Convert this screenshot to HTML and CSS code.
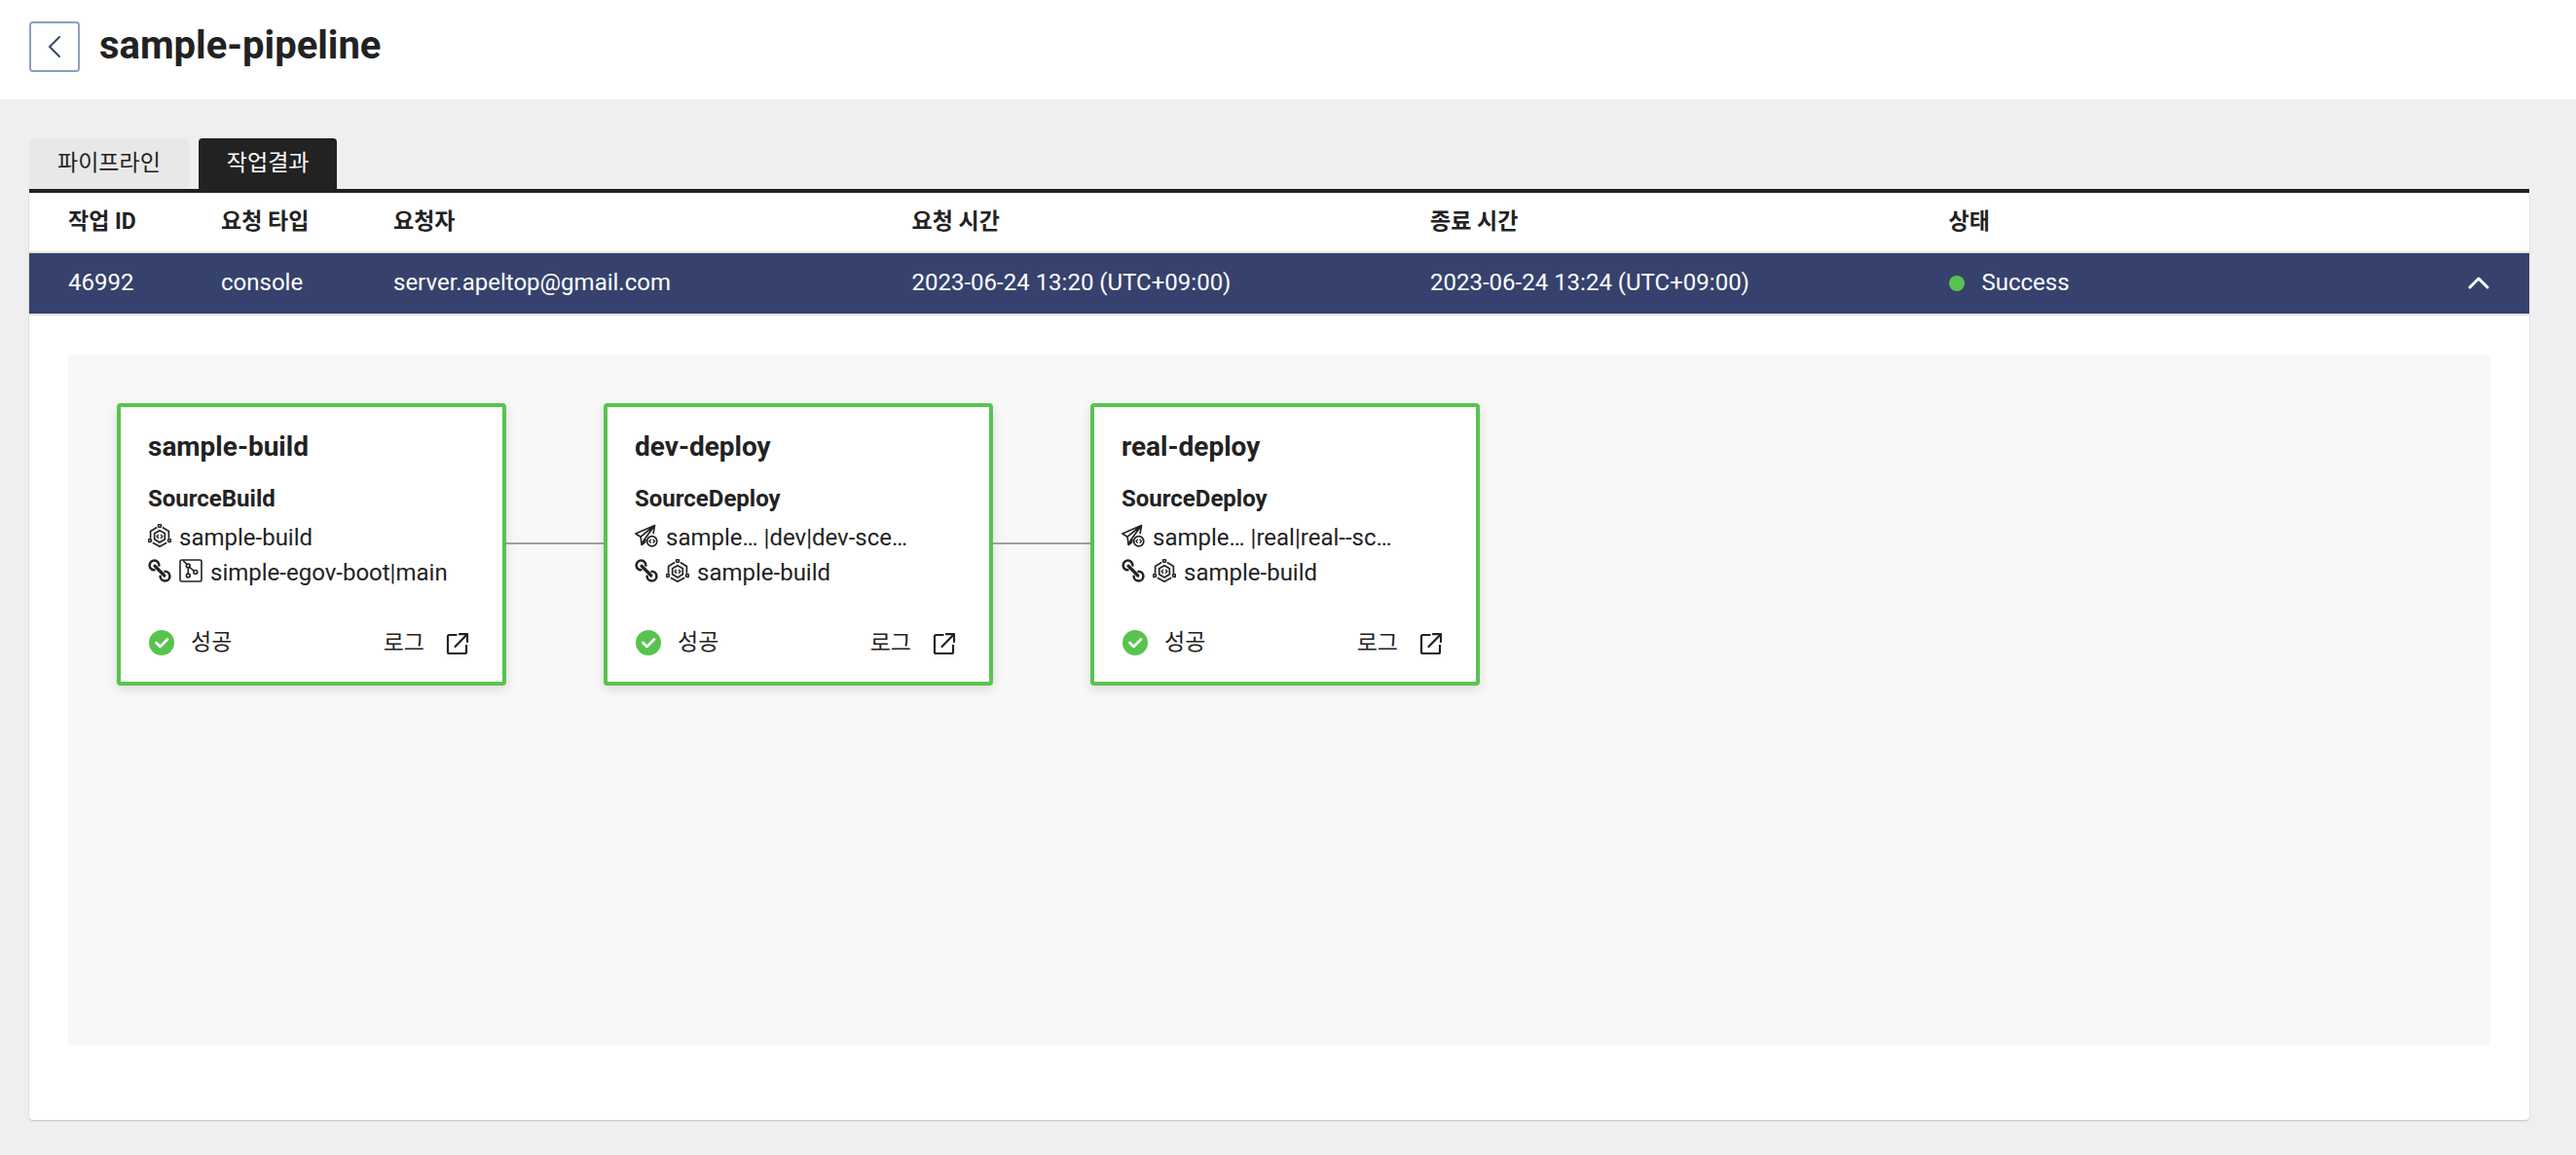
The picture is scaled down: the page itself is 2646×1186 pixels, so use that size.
FILE: index.html
```html
<!DOCTYPE html>
<html lang="ko">
<head>
<meta charset="utf-8">
<meta name="viewport" content="width=device-width, initial-scale=1">
<title>sample-pipeline</title>
<link rel="stylesheet" href="styles.css">
</head>
<body>
<svg class="sprite" aria-hidden="true">
  <symbol id="icon-build" viewBox="0 0 24 24">
    <g fill="none" stroke="currentColor" stroke-width="1.7">
      <path d="M9.2 3.6 2.6 7.4v7.4M14.8 3.6l6.6 3.8v7.4M4.8 19.2l7.2 4 7.2-4"/>
      <circle cx="12" cy="2" r="1.5"/><circle cx="2" cy="17" r="1.5"/><circle cx="22" cy="17" r="1.5"/>
      <path d="m12 6.8 5.3 3v6L12 18.900l-5.300-3.100v-6z"/>
      <path d="M10.900 10.900 9.200 12.800l1.700 1.900M13.100 10.900l1.700 1.900-1.700 1.900" stroke-width="1.400"/>
    </g>
  </symbol>
  <symbol id="icon-deploy" viewBox="0 0 24 24">
    <g fill="none" stroke="currentColor" stroke-width="1.7" stroke-linejoin="round">
      <path d="M20.500 1.500.900 10l5.200 3.200zM20.500 1.500 6.100 13.200l1 8.300 2.800-5.500zM20.500 1.500 9.900 16l1.800 1.200M20.500 1.500l-1.500 8.700M7.100 21.500l4.200-3.400"/>
      <circle cx="17.700" cy="17.700" r="5.100"/>
      <path d="m16.700 15.800-1.700 1.900 1.700 1.900M18.700 15.800l1.700 1.900-1.700 1.900" stroke-width="1.400"/>
    </g>
  </symbol>
  <symbol id="icon-link" viewBox="0 0 24 24">
    <g fill="none" stroke="currentColor" stroke-width="2.500" stroke-linecap="round">
      <path d="M6.400 11.300a4.900 4.900 0 1 1 5-4.700M17.500 12.800a4.900 4.900 0 1 1-4.900 5"/>
      <path d="m7 7.200 9.800 9.800" stroke-width="3.200"/>
    </g>
  </symbol>
  <symbol id="icon-repo" viewBox="0 0 24 24">
    <g fill="none" stroke="currentColor" stroke-width="1.600">
      <rect x="1" y="1" width="22" height="22" rx="1.500"/>
      <path d="M4 1.500 8 5.500M9.300 9v6M10.800 8.500l4.400 3.700"/>
      <circle cx="9.300" cy="7" r="1.900"/><circle cx="9.300" cy="17" r="1.900"/><circle cx="16.800" cy="13.400" r="1.900"/>
    </g>
  </symbol>
  <symbol id="icon-check" viewBox="0 0 28 28">
    <circle cx="14" cy="14" r="13" fill="#57c44f"/>
    <path d="m8.500 14 4 4 7.500-7.500" fill="none" stroke="#fff" stroke-width="2.600" stroke-linecap="round" stroke-linejoin="round"/>
  </symbol>
  <symbol id="icon-open" viewBox="0 0 24 24">
    <g fill="none" stroke="currentColor" stroke-width="2.200" stroke-linejoin="round">
      <path d="M11.500 3H3.500a1.500 1.500 0 0 0-1.500 1.500v16A1.500 1.500 0 0 0 3.500 22h16a1.500 1.500 0 0 0 1.500-1.500V13"/>
      <path d="M14 2.200h8V10M21.500 2.700 9.500 15" stroke-linecap="round"/>
    </g>
  </symbol>
</svg>

<header class="page-header">
  <button class="back-button" type="button" aria-label="뒤로">
    <svg class="back-icon" viewBox="0 0 14 24" aria-hidden="true"><path d="M12 2 2 12l10 10"/></svg>
  </button>
  <h1 class="page-title">sample-pipeline</h1>
</header>

<main class="page-body">
  <div class="tabs" role="tablist">
    <button class="tab" type="button" role="tab" aria-selected="false">파이프라인</button>
    <button class="tab tab-active" type="button" role="tab" aria-selected="true">작업결과</button>
  </div>

  <section class="result">
    <table class="jobs">
      <colgroup>
        <col class="col-short"><col class="col-short"><col><col><col><col><col class="col-toggle">
      </colgroup>
      <thead>
        <tr>
          <th scope="col">작업 ID</th>
          <th scope="col">요청 타입</th>
          <th scope="col">요청자</th>
          <th scope="col">요청 시간</th>
          <th scope="col">종료 시간</th>
          <th scope="col">상태</th>
          <td></td>
        </tr>
      </thead>
      <tbody>
        <tr class="job-selected">
          <td>46992</td>
          <td>console</td>
          <td>server.apeltop@gmail.com</td>
          <td>2023-06-24 13:20 (UTC+09:00)</td>
          <td>2023-06-24 13:24 (UTC+09:00)</td>
          <td><span class="status"><span class="status-dot"></span>Success</span></td>
          <td class="toggle-cell">
            <button class="toggle" type="button" aria-label="접기" aria-expanded="true">
              <svg class="toggle-icon" viewBox="0 0 24 16" aria-hidden="true"><path d="m3 13 9-9 9 9"/></svg>
            </button>
          </td>
        </tr>
      </tbody>
    </table>

    <div class="detail">
      <div class="flow">
        <article class="stage">
          <h2 class="stage-name">sample-build</h2>
          <h3 class="stage-type">SourceBuild</h3>
          <p class="stage-row"><svg class="icon"><use href="#icon-build"/></svg><span>sample-build</span></p>
          <p class="stage-row"><svg class="icon"><use href="#icon-link"/></svg><svg class="icon"><use href="#icon-repo"/></svg><span>simple-egov-boot|main</span></p>
          <footer class="stage-footer">
            <svg class="check"><use href="#icon-check"/></svg><span>성공</span>
            <a class="log-link" href="#log-build">로그<svg class="icon-open"><use href="#icon-open"/></svg></a>
          </footer>
        </article>
        <div class="connector"></div>
        <article class="stage">
          <h2 class="stage-name">dev-deploy</h2>
          <h3 class="stage-type">SourceDeploy</h3>
          <p class="stage-row"><svg class="icon"><use href="#icon-deploy"/></svg><span>sample… |dev|dev-sce…</span></p>
          <p class="stage-row"><svg class="icon"><use href="#icon-link"/></svg><svg class="icon"><use href="#icon-build"/></svg><span>sample-build</span></p>
          <footer class="stage-footer">
            <svg class="check"><use href="#icon-check"/></svg><span>성공</span>
            <a class="log-link" href="#log-dev">로그<svg class="icon-open"><use href="#icon-open"/></svg></a>
          </footer>
        </article>
        <div class="connector"></div>
        <article class="stage">
          <h2 class="stage-name">real-deploy</h2>
          <h3 class="stage-type">SourceDeploy</h3>
          <p class="stage-row"><svg class="icon"><use href="#icon-deploy"/></svg><span>sample… |real|real--sc…</span></p>
          <p class="stage-row"><svg class="icon"><use href="#icon-link"/></svg><svg class="icon"><use href="#icon-build"/></svg><span>sample-build</span></p>
          <footer class="stage-footer">
            <svg class="check"><use href="#icon-check"/></svg><span>성공</span>
            <a class="log-link" href="#log-real">로그<svg class="icon-open"><use href="#icon-open"/></svg></a>
          </footer>
        </article>
      </div>
    </div>
  </section>
</main>
</body>
</html>
```
FILE: styles.css
```css
* {
  box-sizing: border-box;
}

body {
  margin: 0;
  min-height: 100vh;
  background: #efefef;
  color: #222;
  font-family: Roboto, "Noto Sans CJK KR", sans-serif;
  font-size: 24px;
  line-height: 36px;
}

button {
  font: inherit;
  color: inherit;
  cursor: pointer;
}

h1, h2, h3, p {
  margin: 0;
}

.sprite {
  display: none;
}

/* Header */
.page-header {
  display: flex;
  gap: 20px;
  padding: 22px 30px 28px;
  background: #fff;
}

.back-button {
  display: grid;
  place-items: center;
  width: 52px;
  height: 52px;
  padding: 0;
  border: 2px solid #8c9fbf;
  border-radius: 4px;
  background: #fff;
}

.back-icon {
  width: 14px;
  height: 24px;
  fill: none;
  stroke: #37496b;
  stroke-width: 2;
  stroke-linecap: round;
}

.page-title {
  font-size: 40px;
  line-height: 50px;
}

/* Tabs */
.page-body {
  padding: 40px 48px 36px 30px;
}

.tabs {
  display: flex;
  gap: 10px;
  border-bottom: 4px solid #222;
}

.tab {
  height: 52px;
  padding: 0 29px;
  border: 0;
  border-radius: 4px 4px 0 0;
  background: #e8e8e8;
  font-size: 23px;
}

.tab-active {
  background: #222;
  color: #fff;
}

/* Job table */
.result {
  border-radius: 4px;
  background: #fff;
  box-shadow: 0 1px 2px rgba(0, 0, 0, 0.2);
}

.jobs {
  width: 100%;
  table-layout: fixed;
  border-collapse: separate;
  border-spacing: 0;
  text-align: left;
}

.col-short {
  width: 177px;
}

.col-toggle {
  width: 84px;
}

.jobs th,
.jobs td {
  height: 62px;
  padding: 0 20px;
  border-bottom: 2px solid #e2e2e2;
  white-space: nowrap;
}

.jobs th {
  font-size: 23px;
}

.jobs th:first-child,
.jobs td:first-child {
  padding-left: 40px;
}

.jobs .job-selected td {
  height: 64px;
  padding-bottom: 2px;
  background: #36426d;
  color: #fff;
}

.status {
  display: flex;
  align-items: center;
  gap: 18px;
}

.status-dot {
  width: 16px;
  height: 16px;
  margin-top: 2px;
  border-radius: 50%;
  background: #57c44f;
}

.jobs .toggle-cell {
  padding: 0 40px 0 0;
  text-align: right;
}

.toggle {
  padding: 0;
  border: 0;
  background: none;
}

.toggle-icon {
  display: block;
  width: 24px;
  height: 16px;
  fill: none;
  stroke: #fff;
  stroke-width: 3;
  stroke-linecap: round;
  stroke-linejoin: round;
}

/* Pipeline flow */
.detail {
  padding: 40px 40px 76px;
}

.flow {
  display: flex;
  align-items: flex-start;
  min-height: 710px;
  padding: 50px;
  background: #f8f8f8;
}

.stage {
  width: 400px;
  padding: 20px 28px;
  border: 4px solid #57c44f;
  border-radius: 4px;
  background: #fff;
  box-shadow: 0 4px 12px rgba(0, 0, 0, 0.12);
}

.connector {
  width: 100px;
  height: 2px;
  margin-top: 143px;
  background: #a0a0a0;
}

.stage-name {
  margin-bottom: 14px;
  font-size: 28px;
  line-height: 42px;
}

.stage-type {
  margin-bottom: 4px;
  font-size: 24px;
}

.stage-row {
  display: flex;
  align-items: center;
  gap: 8px;
  white-space: nowrap;
}

.icon {
  width: 24px;
  height: 24px;
  margin-bottom: 4px;
  overflow: visible;
}

.stage-footer {
  display: flex;
  align-items: center;
  gap: 16px;
  height: 40px;
  margin-top: 34px;
  font-size: 23px;
}

.check {
  width: 28px;
  height: 28px;
}

.log-link {
  display: flex;
  align-items: center;
  gap: 22px;
  margin-left: auto;
  padding: 2px 6px 0 0;
  color: inherit;
  text-decoration: none;
}

.icon-open {
  width: 24px;
  height: 24px;
}
```
